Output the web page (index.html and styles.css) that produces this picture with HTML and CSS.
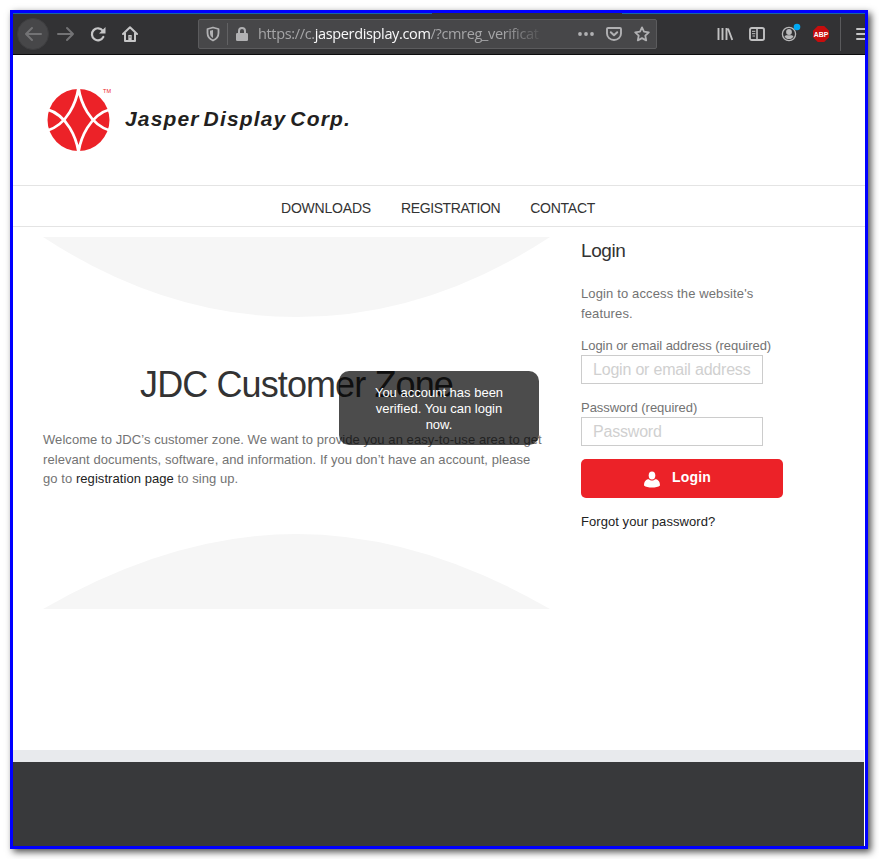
FILE: index.html
```html
<!DOCTYPE html>
<html lang="en">
<head>
<meta charset="utf-8">
<title>JDC Customer Zone</title>
<link rel="stylesheet" href="styles.css">
</head>
<body>
<div class="window">
  <div class="toolbar">
    <span class="back"><svg width="18" height="16" viewBox="0 0 18 16"><path d="M17 8H2M8 2L2 8l6 6" fill="none" stroke="#737375" stroke-width="2" stroke-linecap="round" stroke-linejoin="round"/></svg></span>
    <svg class="fwd" width="18" height="16" viewBox="0 0 18 16"><path d="M1 8h15M10 2l6 6-6 6" fill="none" stroke="#737375" stroke-width="2" stroke-linecap="round" stroke-linejoin="round"/></svg>
    <svg class="reload" width="16" height="16" viewBox="0 0 16 16"><path d="M12.7 4.6A6 6 0 1 0 13.3 11" fill="none" stroke="#c6c6c7" stroke-width="2.2" stroke-linecap="round"/><path d="M15.5 1v6.5H9z" fill="#c6c6c7"/></svg>
    <svg class="home" width="16" height="16" viewBox="0 0 16 16"><path d="M1 8l7-6.8L15 8M3 7v8h10V7" fill="none" stroke="#c6c6c7" stroke-width="2" stroke-linejoin="round" stroke-linecap="round"/><path d="M6.3 9h3.4v6H6.3z" fill="#c6c6c7"/><path d="M7.5 10.5h1v1h-1z" fill="#323234"/></svg>
    <div class="urlbar">
      <svg class="shield" width="14" height="16" viewBox="0 0 14 16"><path d="M7 1.5L12.5 3v4c0 3.600-2 6-5.500 7.500C3.500 13 1.500 10.600 1.500 7V3z" fill="none" stroke="#b1b1b3" stroke-width="1.800" stroke-linejoin="round"/><path d="M7 4v8C5 10.800 4 9.300 4 7V4.700z" fill="#b1b1b3"/></svg>
      <span class="sep"></span>
      <svg class="lock" width="12" height="14" viewBox="0 0 12 14"><path d="M3 7V4a3 3 0 0 1 6 0v3" fill="none" stroke="#b1b1b3" stroke-width="2"/><rect y="6" width="12" height="8" rx="1.300" fill="#b1b1b3"/></svg>
      <span class="url"><span>https://c.</span><b>jasperdisplay.com</b><span>/?cmreg_verificat</span></span>
      <svg class="dots" width="16" height="4" viewBox="0 0 16 4"><g fill="#b1b1b3"><circle cx="2" cy="2" r="1.900"/><circle cx="8" cy="2" r="1.900"/><circle cx="14" cy="2" r="1.900"/></g></svg>
      <svg class="pocket" width="16" height="14" viewBox="0 0 16 14"><path d="M2 1h12a1 1 0 0 1 1 1v4.500a7 6.500 0 0 1-14 0V2a1 1 0 0 1 1-1z" fill="none" stroke="#b1b1b3" stroke-width="1.900"/><path d="M4.800 5.200L8 8.300l3.200-3.100" fill="none" stroke="#b1b1b3" stroke-width="2" stroke-linecap="round" stroke-linejoin="round"/></svg>
      <svg class="star" width="16" height="16" viewBox="0 0 16 16"><path d="M8 1.400l2 4.300 4.800.6-3.500 3.300.9 4.800L8 12.100l-4.200 2.300.9-4.800L1.200 6.300 6 5.700z" fill="none" stroke="#b1b1b3" stroke-width="1.800" stroke-linejoin="round"/></svg>
    </div>
    <svg class="library" width="16" height="14" viewBox="0 0 16 14"><path d="M1.500 1v12M5.500 1v12M9.500 1v12M11 1.500L15.300 13" fill="none" stroke="#c1c1c2" stroke-width="1.900"/></svg>
    <svg class="sidebar" width="16" height="14" viewBox="0 0 16 14"><rect x="1" y="1" width="14" height="12" rx="1.800" fill="none" stroke="#c1c1c2" stroke-width="1.900"/><path d="M8 1v12" stroke="#c1c1c2" stroke-width="1.600"/><path d="M3 4.300h3.300M3 6.700h3.300M3.500 9h2.500" stroke="#c1c1c2" stroke-width="1"/></svg>
    <svg class="account" width="20" height="20" viewBox="0 0 20 20"><circle cx="8" cy="11" r="6.600" fill="none" stroke="#b9b9ba" stroke-width="1.300"/><circle cx="8" cy="9" r="2.900" fill="#b9b9ba"/><path d="M3.500 13.500c1-1.700 2-1.300 4.500-1.300s3.500-.4 4.500 1.300A5.200 5.200 0 0 1 3.500 13.500z" fill="#b9b9ba"/><circle cx="16" cy="4" r="3.300" fill="#00a9f4"/></svg>
    <svg class="abp" width="16" height="16" viewBox="0 0 16 16"><path d="M4.800 0h6.400L16 4.800v6.400L11.200 16H4.800L0 11.200V4.800z" fill="#c70d0d"/><text x="8" y="11" text-anchor="middle" textLength="14.500" lengthAdjust="spacingAndGlyphs">ABP</text></svg>
    <span class="menu-sep"></span>
    <svg class="menu" width="9" height="14" viewBox="0 0 9 14"><path d="M1 2h8M1 7h8M1 12h8" stroke="#c6c6c7" stroke-width="2" stroke-linecap="round"/></svg>
  </div>
  <header class="header">
    <svg class="logo" width="66" height="64" viewBox="0 0 66 64"><circle cx="31.500" cy="33" r="31" fill="#ec2228"/><g fill="none" stroke="#fff" stroke-width="2.800"><path d="M31.500 1C29.500 14 21 38 -1 44M31.500 1C33.500 14 42 38 64 44M31.500 65C29.500 52 21 28 -1 22M31.500 65C33.500 52 42 28 64 22"/></g><text x="56" y="6" class="tm" textLength="8">TM</text></svg>
    <span class="brand">Jasper Display Corp.</span>
  </header>
  <nav class="nav"><a class="n1">DOWNLOADS</a><a class="n2">REGISTRATION</a><a class="n3">CONTACT</a></nav>
  <main class="main">
    <section class="intro">
      <svg class="curve-top" width="507" height="80" viewBox="0 0 507 80"><path d="M0 0H507Q385 80 253.500 80T0 0z" fill="#f6f6f6"/></svg>
      <h1>JDC Customer Zone</h1>
      <p>Welcome to JDC’s customer zone. We want to provide you an easy-to-use area to get<br>relevant documents, software, and information. If you don’t have an account, please<br>go to <a>registration page</a> to sing up.</p>
      <svg class="curve-bottom" width="507" height="75" viewBox="0 0 507 75"><path d="M0 75Q130 0 253.500 0T507 75z" fill="#f6f6f6"/></svg>
    </section>
    <aside class="login">
      <h2>Login</h2>
      <p>Login to access the website's<br>features.</p>
      <label>Login or email address (required)</label>
      <div class="field">Login or email address</div>
      <label>Password (required)</label>
      <div class="field">Password</div>
      <div class="button"><svg width="16" height="17" viewBox="0 0 16 17"><ellipse cx="8" cy="4.400" rx="3.300" ry="4" fill="#fff"/><path d="M0 14.500C0 10 2.500 8.300 4.800 8.300 6.500 10 9.500 10 11.200 8.300 13.500 8.300 16 10 16 14.500 13 17.300 3 17.300 0 14.500z" fill="#fff"/></svg><span>Login</span></div>
      <a class="forgot">Forgot your password?</a>
    </aside>
  </main>
  <footer class="footer"></footer>
  <div class="toast">You account has been<br>verified. You can login<br>now.</div>
</div>
</body>
</html>
```
FILE: styles.css
```css
* { box-sizing: border-box; }
body { margin: 0; background: #fff; font-family: "Liberation Sans", Arial, sans-serif; overflow: hidden; }
svg { display: block; flex: none; }
.window { position: relative; width: 858px; height: 839px; margin: 10px; border: 3px solid #00f; background: #fff; box-shadow: 3px 3px 7px rgba(0,0,0,.7); display: flex; flex-direction: column; white-space: nowrap; }
.toolbar { height: 42px; flex: none; background: linear-gradient(90deg, #1767a8 419px, #323234 419px 609px, #1767a8 609px) 0 0 / 100% 1px no-repeat #323234; border-bottom: 1px solid #0c0c0d; display: flex; align-items: center; overflow: hidden; }
.back { width: 32px; height: 32px; margin-left: 4px; border-radius: 50%; background: #474749; border: 1px solid #3e3e40; display: flex; align-items: center; justify-content: center; flex: none; }
.fwd { margin-left: 8px; }
.reload { margin-left: 15px; }
.home { margin-left: 16px; }
.urlbar { width: 459px; height: 30px; flex: none; margin-left: 60px; background: #474749; border: 1px solid #5b5b5d; border-radius: 2px; display: flex; align-items: center; }
.shield { margin-left: 7px; }
.sep { width: 1px; height: 22px; background: #626264; margin-left: 7px; flex: none; }
.lock { margin-left: 8px; }
.url { width: 288px; margin-left: 10px; flex: none; font: 14.500px/20px "Open Sans", sans-serif; letter-spacing: -.35px; color: #a5a5a7; display: flex; -webkit-mask-image: linear-gradient(90deg, #000 245px, transparent 287px); mask-image: linear-gradient(90deg, #000 245px, transparent 287px); }
.url b { font-weight: 400; color: #f9f9fa; }
.dots { margin-left: 32px; }
.pocket { margin-left: 12px; }
.star { margin-left: 12px; }
.library { margin-left: 60px; }
.sidebar { margin-left: 16px; }
.account { margin-left: 16px; margin-top: -2px; }
.abp { margin-left: 12px; }
.abp text { font: bold 8px "Liberation Sans", sans-serif; fill: #fff; }
.menu-sep { width: 1px; height: 34px; background: #5a5a5c; margin-left: 11px; flex: none; }
.menu { margin-left: 15px; }
.header { height: 131px; flex: none; border-bottom: 1px solid #e4e4e4; display: flex; padding: 32px 0 0 34px; }
.tm { font-size: 5.500px; fill: #ec2228; }
.brand { font: italic bold 21px/26px "Liberation Sans", Arial, sans-serif; color: #231f20; letter-spacing: 1.150px; word-spacing: -3px; padding: 19px 0 0 12px; }
.nav { height: 41px; flex: none; border-bottom: 1px solid #e4e4e4; display: flex; gap: 30px; padding: 0 0 0 268px; font-size: 14px; line-height: 44px; color: #333; }
.n1 { letter-spacing: -.2px; }
.n2 { letter-spacing: -.4px; }
.n3 { letter-spacing: -.25px; }
.main { height: 523px; flex: none; display: flex; padding: 10px 0 0 30px; }
.intro { width: 507px; }
h1 { font-weight: 400; font-size: 36px; line-height: 40px; letter-spacing: -.9px; color: #333; margin: 48px 0 0; text-align: center; }
.intro p { margin: 25px 0 0; font-size: 13px; line-height: 19.500px; letter-spacing: .065px; color: #737373; }
.intro a, .forgot { color: #222; }
.curve-bottom { margin-top: 45px; }
.login { width: 202px; margin-left: 31px; font-size: 13px; color: #737373; }
h2 { font-weight: 400; font-size: 19px; line-height: 24px; letter-spacing: -.4px; color: #333; margin: 2px 0 0; }
.login p { margin: 21px 0 0; line-height: 20px; letter-spacing: .13px; }
.login label { display: block; margin-top: 14px; line-height: 16px; letter-spacing: -.04px; }
.field { width: 182px; height: 29px; margin-top: 1px; border: 1px solid #ccc; padding-left: 11px; font-size: 16px; line-height: 27px; letter-spacing: -.2px; color: #d0d0d0; }
.login .field + label { margin-top: 16px; }
.login .field + label { margin-top: 16px; }
.button { height: 39px; margin-top: 13px; background: #ec2228; border-radius: 5px; display: flex; align-items: center; padding-left: 63px; color: #fff; font-weight: bold; font-size: 14px; }
.button svg { margin-top: 1px; }
.button span { margin: -4px 0 0 12px; letter-spacing: .2px; }
.forgot { display: block; margin-top: 15px; line-height: 18px; letter-spacing: .06px; }
.footer { flex: 1; margin-right: 1px; border-top: 12px solid #e8eaed; background: #38393b; }
.toast { position: absolute; left: 326px; top: 358px; width: 200px; height: 74px; border-radius: 10px; background: rgba(0,0,0,.7); color: #fff; font-size: 13px; line-height: 16px; text-align: center; padding-top: 14px; }
```
